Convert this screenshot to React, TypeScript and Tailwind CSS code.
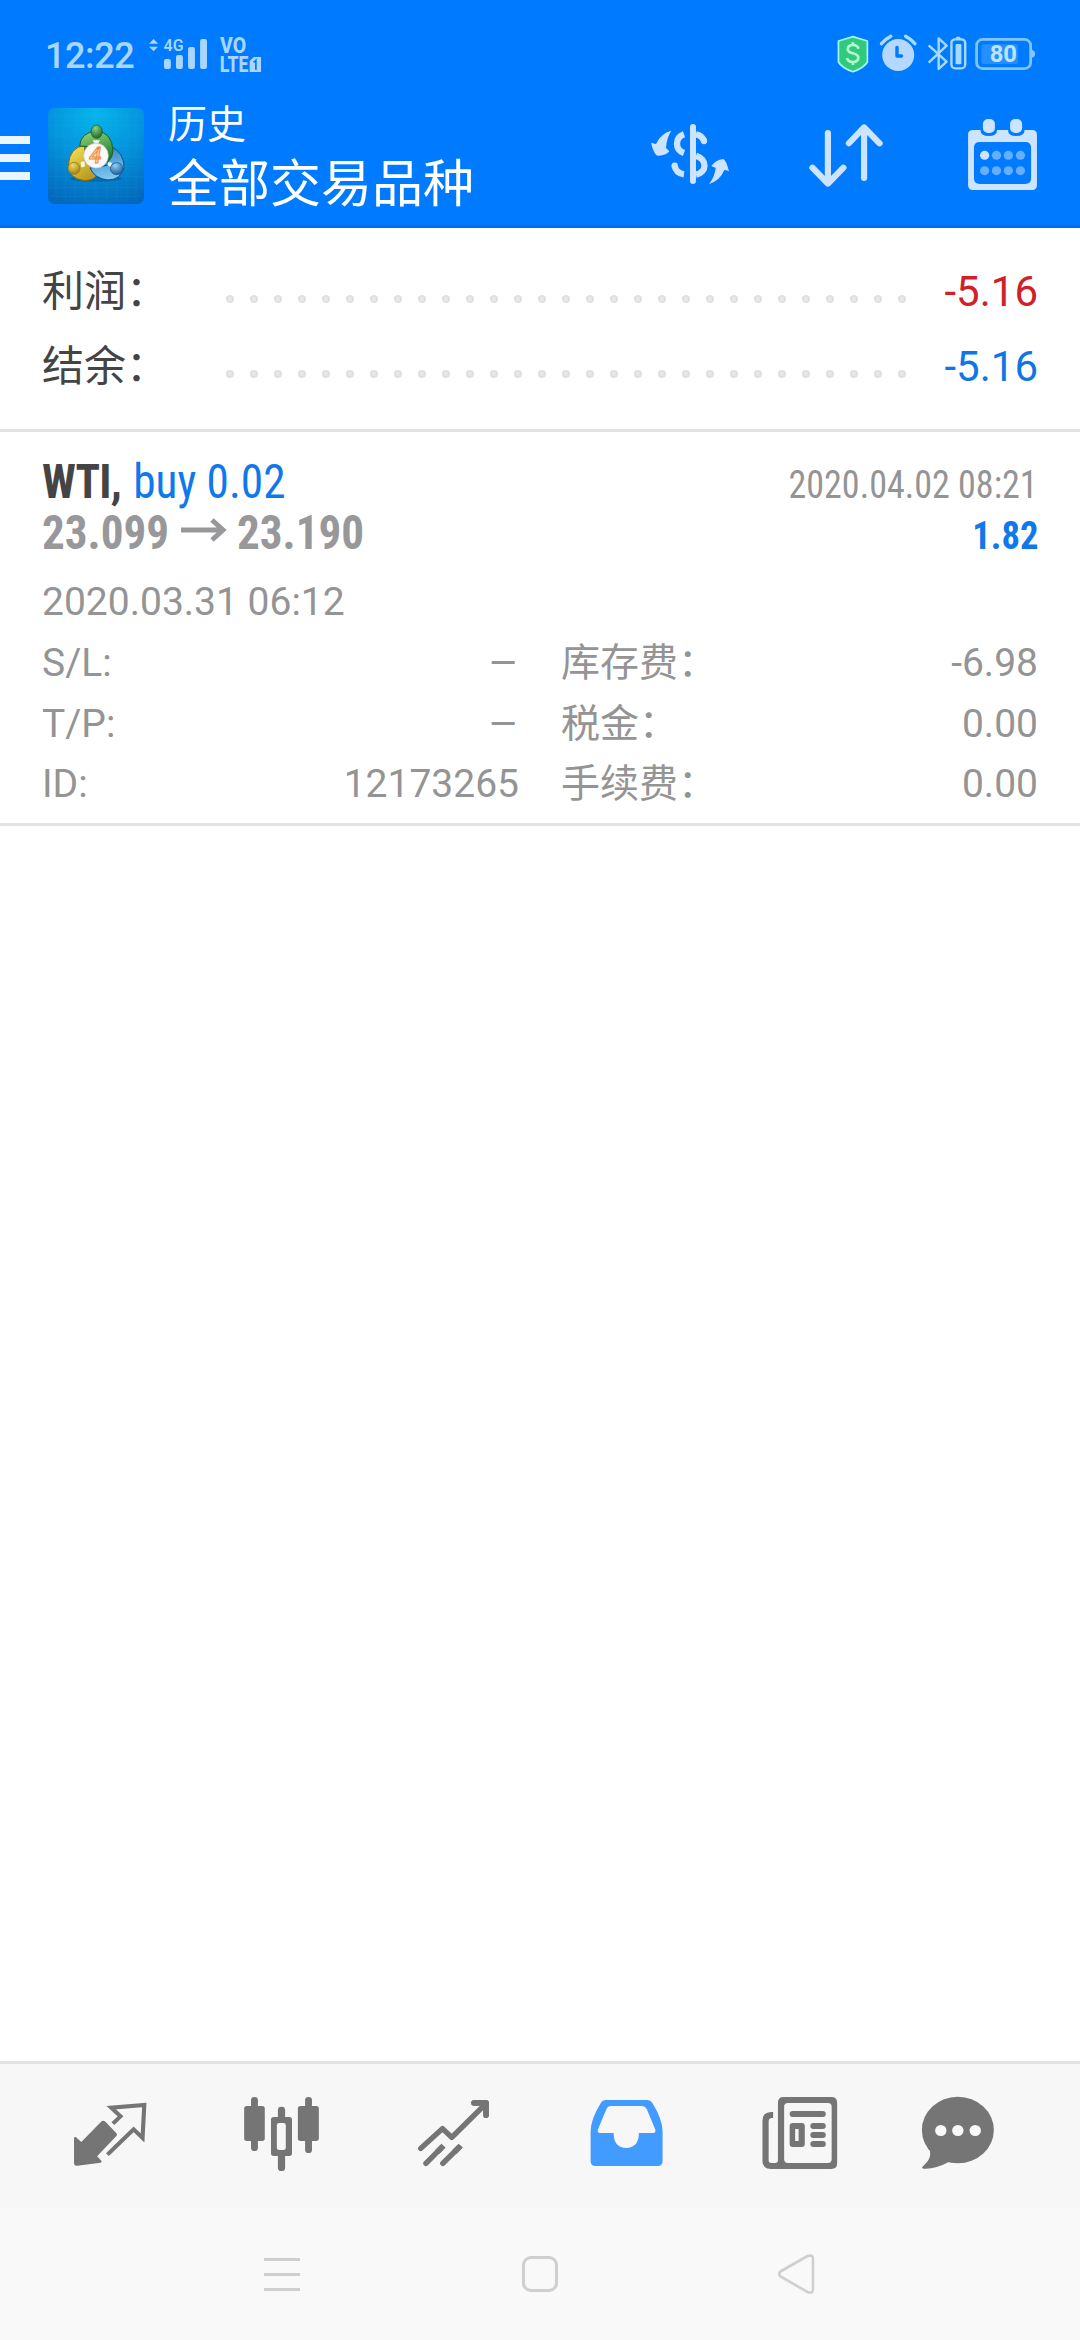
import type { ReactNode } from "react";

const DOTS = Array.from({ length: 29 }, (_, i) => i);

function SignalIcons() {
  return (
    <svg className="h-12 w-[120px]" viewBox="421 90 348.5 144" preserveAspectRatio="none" fill="#a9d6ff" fontFamily="Roboto">
      <path d="M446 117l13 14h-26zM446 154l13-14h-26z" />
      <text x="475" y="153" fontSize="50" fontWeight="600" textLength="58" lengthAdjust="spacingAndGlyphs">4G</text>
      <rect x="476" y="177" width="20" height="30" rx="6" />
      <rect x="511" y="165" width="20" height="42" rx="6" />
      <rect x="546" y="141" width="20" height="66" rx="6" />
      <rect x="581" y="117" width="20" height="90" rx="6" />
      <text x="639" y="160" fontSize="64" fontWeight="800" textLength="76" lengthAdjust="spacingAndGlyphs">VO</text>
      <text x="638" y="216" fontSize="64" fontWeight="800" textLength="83" lengthAdjust="spacingAndGlyphs">LTE</text>
      <path d="M737 171h21v45h-33v-33z" />
      <path d="M736 187l7-6v28" fill="none" stroke="#007aff" strokeWidth="5" />
    </svg>
  );
}

function StatusIcons() {
  return (
    <svg className="h-12 w-[207px]" viewBox="856 90 601 144" preserveAspectRatio="none" fontFamily="Roboto">
      <path d="M908 110l42 13v63q-10 18-42 29q-32-11-42-29v-63z" fill="#2fca7c" stroke="#a4f4f0" strokeWidth="5" strokeLinejoin="round" />
      <path d="M924 146q-2-11-16-11t-15 12q0 9 15 13t16 13q-1 13-16 13t-17-12M908 127v10M908 186v9" fill="none" stroke="#b6f5d2" strokeWidth="8" />
      <g fill="#b5d8ff">
        <ellipse cx="1039.500" cy="165" rx="46.500" ry="48" />
        <path d="M991 131q12-14 27-22M1088 131q-12-14-27-22" fill="none" stroke="#a6dcff" strokeWidth="10" strokeLinecap="round" />
      </g>
      <path d="M1036 142v26h13" fill="none" stroke="#007aff" strokeWidth="10" strokeLinecap="round" strokeLinejoin="round" />
      <g fill="none" stroke="#a6d9ff" strokeWidth="7" strokeLinejoin="round">
        <path d="M1128 136l52 49-23 22v-92l23 22-52 51" />
        <rect x="1194" y="118" width="40" height="87" rx="11" />
      </g>
      <rect x="1206" y="132" width="17" height="61" rx="3" fill="#a6d9ff" />
      <rect x="1207" y="110" width="13" height="8" rx="3" fill="#a6d9ff" />
      <rect x="1281" y="133" width="106" height="59" rx="6" fill="#268fff" />
      <rect x="1267" y="118" width="157" height="88" rx="18" fill="none" stroke="#7fc6ff" strokeWidth="8" />
      <path d="M1428 149q9 3 9 12t-9 12z" fill="#7fc6ff" />
      <text x="1305" y="186" fontSize="72" fontWeight="700" fill="#bfe3ff" textLength="79" lengthAdjust="spacingAndGlyphs">80</text>
    </svg>
  );
}

function AppLogo() {
  return (
    <svg className="size-24 shrink-0" viewBox="24 24 288 288">
      <defs>
        <radialGradient id="bg" cx="0.5" cy="0.05" r="1">
          <stop offset="0" stopColor="#06b6ea" />
          <stop offset="0.5" stopColor="#0493dc" />
          <stop offset="1" stopColor="#0468ba" />
        </radialGradient>
        <linearGradient id="green" x1="0" y1="0" x2="0.3" y2="1">
          <stop offset="0" stopColor="#9bd877" />
          <stop offset="1" stopColor="#1f7f38" />
        </linearGradient>
        <linearGradient id="gold" x1="0" y1="0" x2="0.6" y2="1">
          <stop offset="0" stopColor="#f8e65a" />
          <stop offset="1" stopColor="#b99a1d" />
        </linearGradient>
        <linearGradient id="blue" x1="0" y1="0" x2="0.2" y2="1">
          <stop offset="0" stopColor="#2c7fc0" />
          <stop offset="1" stopColor="#7cc6f0" />
        </linearGradient>
        <radialGradient id="greenHead" cx="0.4" cy="0.25" r="0.8">
          <stop offset="0" stopColor="#8fd07a" />
          <stop offset="1" stopColor="#14642c" />
        </radialGradient>
        <radialGradient id="goldHead" cx="0.4" cy="0.25" r="0.8">
          <stop offset="0" stopColor="#f0dc60" />
          <stop offset="1" stopColor="#9a7a10" />
        </radialGradient>
        <radialGradient id="blueHead" cx="0.4" cy="0.25" r="0.8">
          <stop offset="0" stopColor="#8fd0f4" />
          <stop offset="1" stopColor="#125a9c" />
        </radialGradient>
      </defs>
      <rect x="24" y="24" width="288" height="288" rx="20" fill="url(#bg)" />
      <path d="M48 30v276M76 30v276M106 30v276M136 30v276M168 30v276M200 30v276M230 30v276M260 30v276M288 30v276M30 46h276M30 76h276M30 108h276M30 138h276M30 170h276M30 200h276M30 230h276M30 262h276M30 290h276" stroke="#5fd0ff" strokeOpacity="0.16" strokeWidth="1.500" />
      <ellipse cx="168" cy="236" rx="78" ry="9" fill="#053e7a" opacity="0.35" />
      <path d="M134 136q-46 6-49 60q2 42 50 46q30-2 38-20l-38-36z" fill="url(#gold)" stroke="#7c6a14" strokeWidth="3" />
      <path d="M214 140q38 18 38 62q-10 38-48 38q-40-4-54-36l52-8z" fill="url(#blue)" stroke="#124f86" strokeWidth="3" />
      <path d="M119 138q2-40 50-45q48 4 50 60q-2 22-15 32l-20-42z" fill="url(#green)" stroke="#1c5c2a" strokeWidth="3" />
      <path d="M158 121l22 0-6 10h-10zM122 186l12-2v16l-10 2zM204 186l12 2-4 14-10-8z" fill="#ffffff" opacity="0.9" />
      <ellipse cx="170" cy="95" rx="17" ry="20" fill="url(#greenHead)" stroke="#1a5a2a" strokeWidth="2" />
      <ellipse cx="102" cy="205" rx="18" ry="18" fill="url(#goldHead)" stroke="#8a7118" strokeWidth="2" />
      <ellipse cx="230" cy="206" rx="19" ry="18" fill="url(#blueHead)" stroke="#164f84" strokeWidth="2" />
      <circle cx="168" cy="167" r="37" fill="#fbf9f7" stroke="#c9c4bd" strokeWidth="2" />
      <text x="148" y="190" fontFamily="Roboto" fontSize="66" fontStyle="italic" fontWeight="500" fill="#fbd9ac" stroke="#ee8b3c" strokeWidth="3">4</text>
    </svg>
  );
}

function ActionIcon({ viewBox, children }: { viewBox: string; children: ReactNode }) {
  return (
    <button className="h-36 w-[156px]">
      <svg className="h-36 w-[156px]" viewBox={viewBox} preserveAspectRatio="none" fill="#cce4ff">
        {children}
      </svg>
    </button>
  );
}

function HeaderActions() {
  return (
    <div className="ml-auto flex">
      <ActionIcon viewBox="-84 -48 468 432">
        <rect x="150" y="72" width="18" height="180" rx="9" />
        <g fill="none" stroke="#cce4ff" strokeWidth="19">
          <path d="M132 103C104 113 104 149 132 159" />
          <path d="M104 197C106 211 116 221 132 223" />
          <path d="M168 103C180 105 188 112 192 123" />
          <path d="M168 167C202 178 202 216 168 224" />
        </g>
        <circle cx="104" cy="197" r="9.500" />
        <circle cx="192" cy="123" r="9.500" />
        <path d="M94 92Q80 112 78 144L88 154Q76 168 54 167Q42 166 33 128L48 132Q62 100 94 92Z" />
        <path d="M207 252Q224 232 227 204L214 198Q226 180 250 177Q258 180 267 214Q260 210 253 210Q240 242 207 252Z" />
      </ActionIcon>
      <ActionIcon viewBox="662 252 453 432">
        <path d="M836 399v151M791 503l45 48 45-48M941 534V383M897 430l44-48 45 48" fill="none" stroke="#cce4ff" strokeWidth="18" strokeLinecap="round" strokeLinejoin="round" />
      </ActionIcon>
      <ActionIcon viewBox="1115 252 453 432">
        <path fillRule="evenodd" d="M1257 390h22q0 18 24 18t24-18h32q0 18 24 18t24-18h22q14 0 14 14v152q0 14-14 14h-172q-14 0-14-14v-152q0-14 14-14zM1277 426q-17 0-17 17v92q0 17 17 17h132q17 0 17-17v-92q0-17-17-17z" />
        <rect x="1286" y="357" width="35" height="42" rx="15" />
        <rect x="1365" y="357" width="35" height="42" rx="15" />
        <circle cx="1291" cy="466" r="13.500" />
        <g fill="#66afff">
          <circle cx="1325.500" cy="466" r="13.500" />
          <circle cx="1360" cy="466" r="13.500" />
          <circle cx="1395" cy="466" r="13.500" />
          <circle cx="1291" cy="512" r="13.500" />
          <circle cx="1325.500" cy="512" r="13.500" />
          <circle cx="1360" cy="512" r="13.500" />
          <circle cx="1395" cy="512" r="13.500" />
        </g>
      </ActionIcon>
    </div>
  );
}

function SummaryRow({ label, value, color }: { label: string; value: string; color: string }) {
  return (
    <div className="flex h-[75px] items-center justify-between text-[42px] leading-[75px]">
      <span className="w-[184px] text-[#444444]">{label}</span>
      <div className="flex flex-1 gap-4 pt-[15px]">
        {DOTS.map((i) => (
          <span key={i} className="size-2 rounded-full border-2 border-[#e0e0e0] bg-[#e9e9e9]" />
        ))}
      </div>
      <span className={color}>{value}</span>
    </div>
  );
}

function DetailRow({ cells, height }: { cells: [string, string, string, string]; height: string }) {
  return (
    <div className={`grid grid-cols-2 gap-x-[42px] ${height}`}>
      <div className="flex justify-between">
        <span>{cells[0]}</span>
        <span className={cells[1] === "–" ? "origin-right scale-x-[1.2]" : ""}>{cells[1]}</span>
      </div>
      <div className="flex justify-between">
        <span>{cells[2]}</span>
        <span>{cells[3]}</span>
      </div>
    </div>
  );
}

function TabIcon({ viewBox, children }: { viewBox: string; children: ReactNode }) {
  return (
    <button className="h-36 w-[172px]">
      <svg className="h-36 w-[172px]" viewBox={viewBox} preserveAspectRatio="none" fill="#757575">
        {children}
      </svg>
    </button>
  );
}

function TabBar() {
  return (
    <nav className="flex h-[147px] border-t-[3px] border-[#e2e2e2] bg-[#f7f7f7] px-6">
      <TabIcon viewBox="69.7 72 499.5 432">
        <path d="M299 242q4 0 8 4l31 34q4 4 0 8l-56 61 13 14q1 4-3 5l-68 9q-9 1-9-8v-76q2-4 6-1l15 14 57-60q3-4 6-4z" />
        <path d="M328 251l22-22-27-26 96-8-5 99-26-26-76 76" fill="none" stroke="#757575" strokeWidth="12" />
      </TabIcon>
      <TabIcon viewBox="569.2 72 499.5 432">
        <rect x="729" y="171" width="20" height="162" rx="10" />
        <rect x="709" y="198" width="60" height="105" rx="8" />
        <rect x="886" y="171" width="20" height="168" rx="10" />
        <rect x="865" y="198" width="61" height="105" rx="8" />
        <rect x="807" y="200" width="21" height="193" rx="10" />
        <rect x="787" y="231" width="61" height="117" rx="8" />
        <rect x="804" y="249" width="26" height="81" rx="7" fill="#f7f7f7" />
      </TabIcon>
      <TabIcon viewBox="1068.7 72 499.5 432">
        <g fill="none" stroke="#757575" strokeWidth="16" strokeLinecap="round" strokeLinejoin="round">
          <path d="M1222 325l63-59 27 26 97-99M1376 189h35v37" />
          <path d="M1237 370l44-46M1286 370l46-47" />
          <path d="M1270 336l18-19M1320 336l18-19" strokeLinecap="butt" strokeWidth="17" />
        </g>
        <path d="M1369 188q0-8 8-8h35q8 0 8 8v37q0 9-8 9t-8-9v-20l-8-8h-19q-8 0-8-9z" />
      </TabIcon>
      <TabIcon viewBox="0 72 499.5 432">
        <path fill="#429bff" fillRule="evenodd" d="M190 180h122q9 0 14 8q30 50 30 86v90q0 14-14 14h-181q-14 0-14-14v-90q0-36 30-86q4-8 13-8zM206 198q-9 0-13 9l-25 62q-2 10 8 10h38v6q2 37 36 39q35-2 37-39v-6h40q10 0 8-10l-25-62q-5-9-14-9z" />
      </TabIcon>
      <TabIcon viewBox="499.5 72 499.5 432">
        <path fillRule="evenodd" d="M707 171h139q17 0 17 17v182q0 17-17 17h-175q-25 0-25-25v-120q0-25 25-26h6v18h-6q-7 1-7 9v118q0 8 8 8h11q8 0 8-8v-173q0-17 16-17zM720 189q-11 0-11 11v158q0 11 11 11h116q11 0 11-11v-158q0-11-11-11z" />
        <rect x="725" y="213" width="105" height="18" rx="9" />
        <path fillRule="evenodd" d="M734 249h26q9 0 9 9v54q0 9-9 9h-26q-9 0-9-9v-54q0-9 9-9zM741 267v36h10v-36z" />
        <rect x="785" y="249" width="45" height="18" rx="9" />
        <rect x="785" y="276" width="45" height="18" rx="9" />
        <rect x="785" y="303" width="45" height="18" rx="9" />
      </TabIcon>
      <TabIcon viewBox="999 72 499.5 432">
        <ellipse cx="1213.500" cy="270" rx="104.500" ry="100" />
        <path d="M1130 322q8 24-4 42l-15 16q-4 5 4 6q32 2 72-20h50l-40-60z" />
        <g fill="#f9f9f9">
          <circle cx="1164" cy="271.500" r="16.500" />
          <circle cx="1213.500" cy="271.500" r="16.500" />
          <circle cx="1264" cy="271.500" r="16.500" />
        </g>
      </TabIcon>
    </nav>
  );
}

function SystemNav() {
  return (
    <div className="flex h-[132px] items-center justify-center bg-[#f9f9f9]">
      <div className="flex w-[258px] justify-center">
        <div className="flex w-9 flex-col gap-3">
          <span className="h-[3px] bg-[#cfcfcf]" />
          <span className="h-[3px] bg-[#cfcfcf]" />
          <span className="h-[3px] bg-[#cfcfcf]" />
        </div>
      </div>
      <div className="flex w-[258px] justify-center">
        <span className="size-9 rounded-[9px] border-[3px] border-[#cfcfcf]" />
      </div>
      <div className="flex w-[258px] justify-center pr-1">
        <svg className="h-10 w-[37px]" viewBox="0 0 37 40" fill="none" stroke="#cfcfcf" strokeWidth="2.600">
          <path d="M2.500 17.500L29.500 2Q35 0 35 5V35Q35 40 29.500 38L2.500 22.500Q0 20 2.500 17.500Z" />
        </svg>
      </div>
    </div>
  );
}

export default function App() {
  return (
    <div className="flex h-[2340px] w-[1080px] flex-col overflow-hidden bg-white font-['Roboto','Noto_Sans_CJK_SC',sans-serif]">
      <header className="h-[228px] border-b-[3px] border-[#0070e6] bg-[#007aff]">
        <div className="flex h-[84px] items-start pl-[45px]">
          <span className="w-[100px] pt-[28px] text-[36px] leading-[57px] font-medium tracking-[-0.4px] text-[#a9d6ff]">12:22</span>
          <div className="pt-[30px]">
            <SignalIcons />
          </div>
          <div className="mr-[38px] ml-auto pt-[30px]">
            <StatusIcons />
          </div>
        </div>
        <div className="flex h-36">
          <div className="flex w-12 flex-col gap-2.5 pt-[52px]">
            <span className="h-2 w-[30px] bg-[#ebf5ff]" />
            <span className="h-2 w-[30px] bg-[#ebf5ff]" />
            <span className="h-2 w-[30px] bg-[#ebf5ff]" />
          </div>
          <div className="pt-6">
            <AppLogo />
          </div>
          <div className="flex flex-col pt-[18px] pl-6 text-white">
            <span className="h-[53px] text-[39px] leading-[46px]">历史</span>
            <span className="text-[51px] leading-[60px]">全部交易品种</span>
          </div>
          <HeaderActions />
        </div>
      </header>

      <section className="h-[204px] border-b-[3px] border-[#e2e2e2] px-[42px] pt-[26px]">
        <SummaryRow label="利润：" value="-5.16" color="text-[#cf2127]" />
        <SummaryRow label="结余：" value="-5.16" color="text-[#0f76e6]" />
      </section>

      <section className="h-[394px] border-b-[3px] border-[#e2e2e2] px-[42px] pt-6 text-[39px] leading-[61px] text-[#949494]">
        <div className="flex h-[51px] items-baseline justify-between font-['Roboto_Condensed','Roboto',sans-serif] leading-[51px]">
          <span className="origin-left scale-x-[0.942] text-[48px]">
            <b className="mr-[2px] tracking-[-0.8px] text-[#444444]">WTI,</b> <span className="text-[#0f78ea]">buy 0.02</span>
          </span>
          <span className="origin-right scale-x-[0.924]">2020.04.02 08:21</span>
        </div>
        <div className="flex h-[51px] items-baseline font-['Roboto_Condensed','Roboto',sans-serif] leading-[51px] font-bold">
          <span className="w-[139px] origin-left scale-x-[0.94] text-[48px] text-[#98989b]">23.099</span>
          <svg className="mt-[11px] h-6 w-[46px] self-start" viewBox="0 0 46 24" fill="none" stroke="#98989b" strokeWidth="5">
            <path d="M0 12H42M31 2L42 12L31 22" />
          </svg>
          <span className="ml-2.5 w-[139px] origin-left scale-x-[0.94] text-[48px] text-[#98989b]">23.190</span>
          <span className="ml-auto origin-right scale-x-[0.94] text-[#0f78ea]">1.82</span>
        </div>
        <div className="mt-[14px] h-[61px]">2020.03.31 06:12</div>
        <DetailRow cells={["S/L:", "–", "库存费：", "-6.98"]} height="h-[61px]" />
        <DetailRow cells={["T/P:", "–", "税金：", "0.00"]} height="h-[61px]" />
        <DetailRow cells={["ID:", "12173265", "手续费：", "0.00"]} height="h-[58px] leading-[58px]" />
      </section>

      <main className="flex-1" />
      <TabBar />
      <SystemNav />
    </div>
  );
}
